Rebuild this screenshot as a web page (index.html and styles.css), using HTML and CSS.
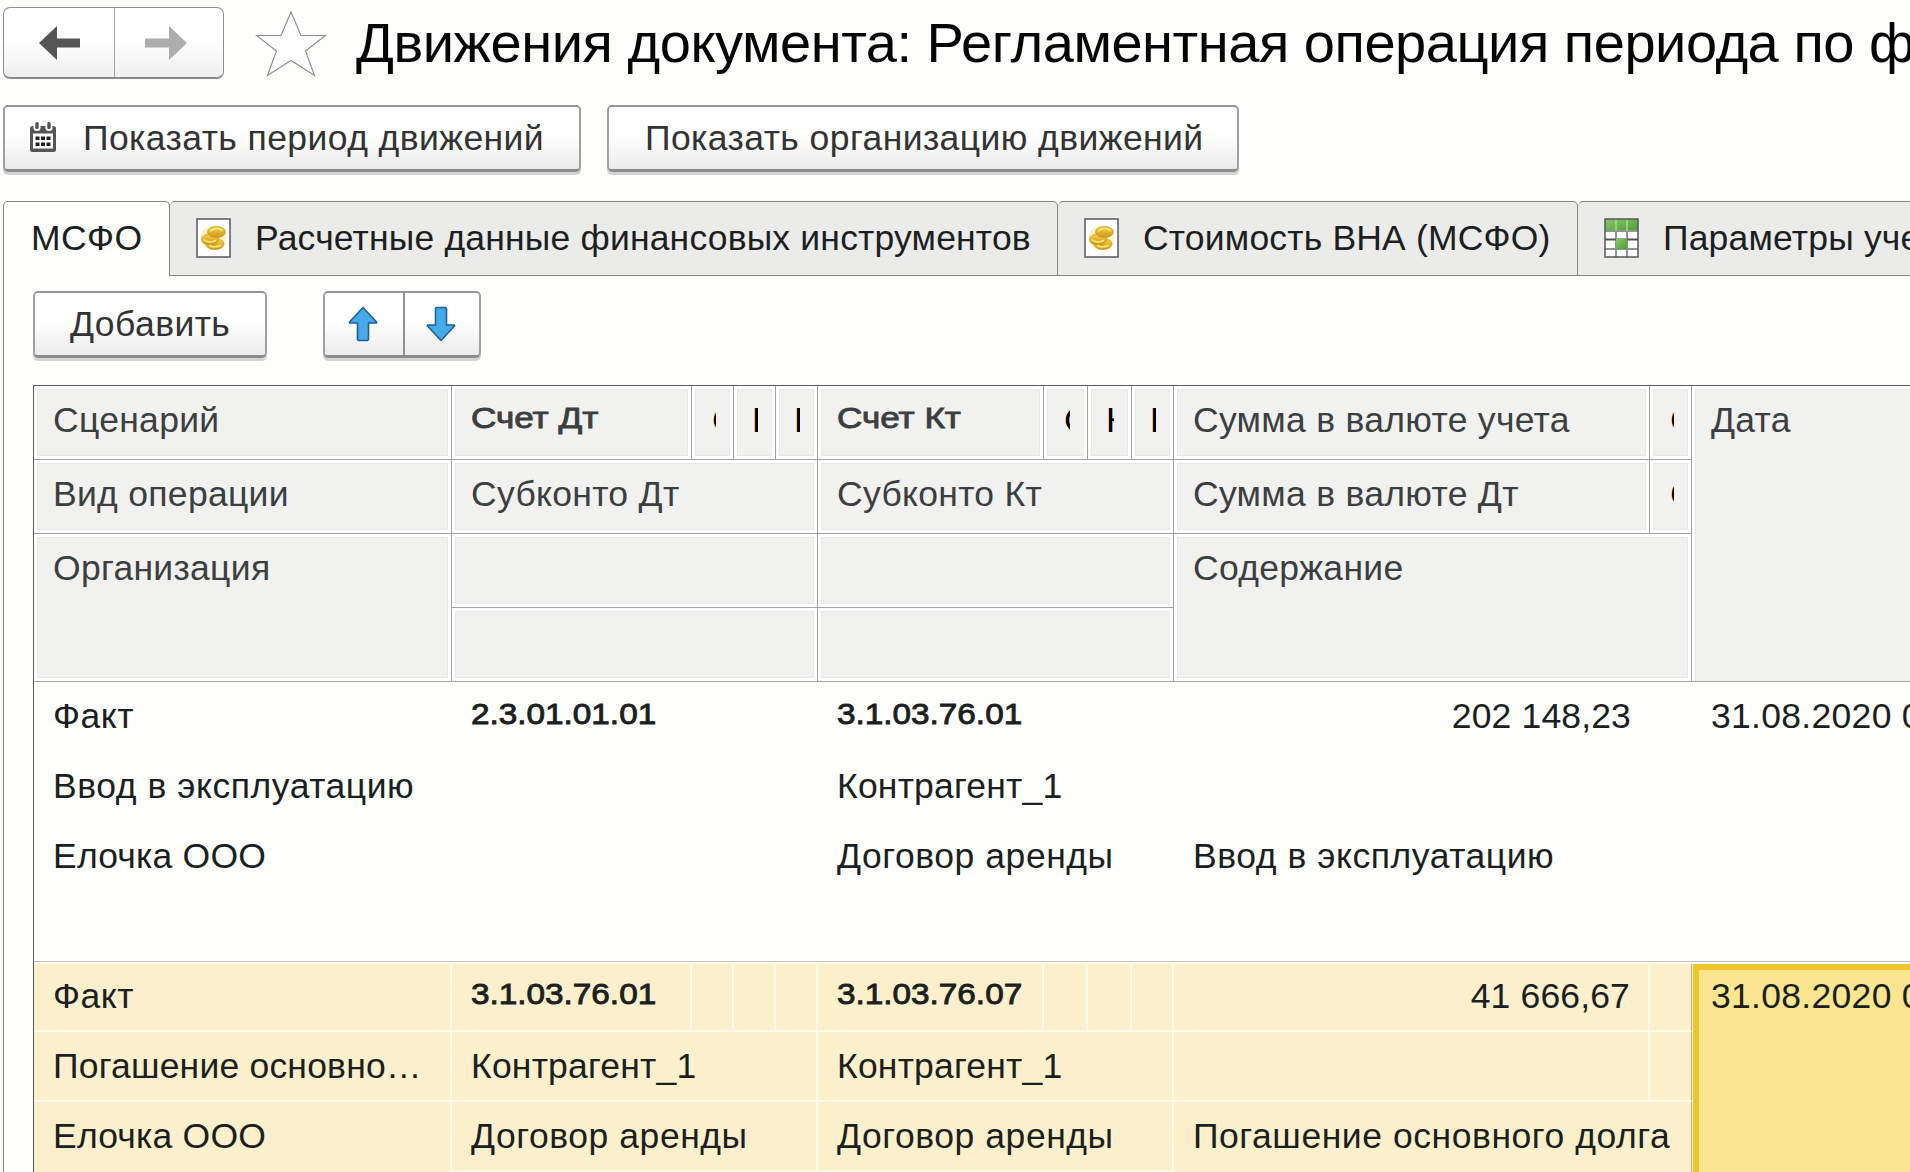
FILE: index.html
```html
<!DOCTYPE html>
<html lang="ru">
<head>
<meta charset="utf-8">
<title>Движения документа</title>
<link rel="stylesheet" href="styles.css">
</head>
<body>
<svg class="defs" aria-hidden="true">
  <defs>
    <linearGradient id="gold" x1="0" y1="0" x2="0" y2="1"><stop offset="0" stop-color="#f5d24a"/><stop offset="1" stop-color="#cf9412"/></linearGradient>
    <linearGradient id="green" x1="0" y1="0" x2="1" y2="1"><stop offset="0" stop-color="#8cc66c"/><stop offset="1" stop-color="#4c9e33"/></linearGradient>
    <symbol id="coins" viewBox="0 0 35 40">
      <rect x="1" y="1" width="33" height="38" fill="#fff" stroke="#55585e" stroke-width="1.5"/>
      <ellipse cx="17.500" cy="20" rx="13" ry="12.500" fill="#f7e7b0" opacity=".6"/>
      <g fill="url(#gold)" stroke="#cf9d22" stroke-width=".8">
        <ellipse cx="19" cy="26" rx="9" ry="5.500"/>
        <ellipse cx="14" cy="21.500" rx="8.500" ry="5.500"/>
        <ellipse cx="20.500" cy="14" rx="9" ry="5.500"/>
      </g>
      <g fill="none" stroke="#fbe57c" stroke-width="1.800">
        <path d="M14.500 13.500c1-3 8-4 12-1"/><path d="M8 21.500c2 3 8 3 12 1"/><path d="M13 27.500c3 2 9 2 12-.5"/>
      </g>
    </symbol>
  </defs>
</svg>

<header class="titlebar">
  <div class="nav">
    <span class="nav-btn"><svg width="42" height="34" viewBox="0 0 42 34"><path d="M0 17 18 0V12.500H41V21.500H18V34Z" fill="#555"/></svg></span>
    <span class="nav-btn"><svg width="42" height="34" viewBox="0 0 42 34"><path d="M42 17 24 0V12.500H0V21.500H24V34Z" fill="#adadad"/></svg></span>
  </div>
  <svg class="star" width="72" height="68" viewBox="0 0 72 68"><path d="M36 2 46 25.500H70.500L50.500 41 59.500 65.500 36 50.500 12.500 65.500 21.500 41 1.500 25.500H26Z" fill="#fff" stroke="#8c8c8c" stroke-width="1.100"/></svg>
  <h1>Движения документа: Регламентная операция периода по ф</h1>
</header>

<div class="commands">
  <button class="btn btn-period">
    <svg width="26" height="30" viewBox="0 0 26 30"><rect y="4" width="26" height="26" rx="2.500" fill="#555"/><rect x="3" y="11.500" width="20" height="15" fill="#fff"/><circle cx="7" cy="5.500" r="3.600" fill="#fff"/><circle cx="19" cy="5.500" r="3.600" fill="#fff"/><rect x="5.300" y="0" width="3.400" height="7" rx="1.500" fill="#555"/><rect x="17.300" y="0" width="3.400" height="7" rx="1.500" fill="#555"/><path d="M5.500 14.500h4v3.500h-4zM11 14.500h4v3.500h-4zM16.500 14.500h4v3.500h-4zM5.500 20.500h4v3.500h-4zM11 20.500h4v3.500h-4zM16.500 20.500h4v3.500h-4z" fill="#222"/></svg>
    <span>Показать период движений</span>
  </button>
  <button class="btn btn-org"><span>Показать организацию движений</span></button>
</div>

<nav class="tabs">
  <div class="tab tab-active tab-ifrs">МСФО</div>
  <div class="tab tab-calc"><svg width="35" height="40"><use href="#coins"/></svg>Расчетные данные финансовых инструментов</div>
  <div class="tab tab-cost"><svg width="35" height="40"><use href="#coins"/></svg>Стоимость ВНА (МСФО)</div>
  <div class="tab tab-params"><svg width="35" height="40" viewBox="0 0 35 40"><rect x="1" y="1" width="33" height="38" fill="#fff"/><rect x="1" y="1" width="33" height="12" fill="url(#green)"/><rect x="12" y="21" width="11" height="10" fill="url(#green)"/><g stroke="#8e9490" stroke-width="2" fill="none"><path d="M12 13V39M23 13V39M1 31H34M1 13H34"/><path d="M1 21.500H34" stroke="#555"/></g><rect x="12" y="20.500" width="11" height="10.500" fill="url(#green)"/><path d="M12 1V13M23 1V13" stroke="#a9d890" stroke-width="1.500"/><rect x="1" y="1" width="33" height="38" fill="none" stroke="#555" stroke-width="1.500"/></svg>Параметры учета</div>
</nav>

<main class="panel">
  <div class="toolbar">
    <button class="btn btn-add"><span>Добавить</span></button>
    <div class="btn move">
      <span><svg width="30" height="36" viewBox="0 0 30 36"><path d="M15 1.500 28.500 16V17H20.500V33.500L19.500 34.500H10.500L9.500 33.500V17H1.500V16Z" fill="#45a9ea" stroke="#1d5f96" stroke-width="1.600" stroke-linejoin="round"/></svg></span>
      <span><svg width="30" height="36" viewBox="0 0 30 36"><path d="M15 34.500 28.500 20V19H20.500V2.500L19.500 1.500H10.500L9.500 2.500V19H1.500V20Z" fill="#45a9ea" stroke="#1d5f96" stroke-width="1.600" stroke-linejoin="round"/></svg></span>
    </div>
  </div>

  <section class="table">
    <div class="grid head">
      <div class="cell">Сценарий</div>
      <div class="cell acc"><b>Счет Дт</b></div>
      <div class="cell tiny round"><i>С</i></div>
      <div class="cell tiny"><i>П</i></div>
      <div class="cell tiny"><i>П</i></div>
      <div class="cell acc"><b>Счет Кт</b></div>
      <div class="cell tiny round wide"><i>С</i></div>
      <div class="cell tiny wide"><i>К</i></div>
      <div class="cell tiny"><i>П</i></div>
      <div class="cell">Сумма в валюте учета</div>
      <div class="cell tiny round"><i>С</i></div>
      <div class="cell date">Дата</div>

      <div class="cell">Вид операции</div>
      <div class="cell span4">Субконто Дт</div>
      <div class="cell span4">Субконто Кт</div>
      <div class="cell">Сумма в валюте Дт</div>
      <div class="cell tiny round"><i>С</i></div>

      <div class="cell rows2">Организация</div>
      <div class="cell span4"></div>
      <div class="cell span4"></div>
      <div class="cell rows2 span2">Содержание</div>
      <div class="cell span4"></div>
      <div class="cell span4"></div>
    </div>

    <div class="grid row">
      <div class="cell">Факт</div>
      <div class="cell span4 acc"><b>2.3.01.01.01</b></div>
      <div class="cell span4 acc"><b>3.1.03.76.01</b></div>
      <div class="cell sum">202 148,23</div>
      <div class="cell"></div>
      <div class="cell date">31.08.2020 0:00:00</div>

      <div class="cell">Ввод в эксплуатацию</div>
      <div class="cell span4"></div>
      <div class="cell span4 party">Контрагент_1</div>
      <div class="cell span2"></div>

      <div class="cell rows2 org">Елочка ООО</div>
      <div class="cell span4"></div>
      <div class="cell span4">Договор аренды</div>
      <div class="cell rows2 span2">Ввод в эксплуатацию</div>
    </div>

    <div class="grid row selected">
      <div class="cell">Факт</div>
      <div class="cell acc"><b>3.1.03.76.01</b></div>
      <div class="cell"></div>
      <div class="cell"></div>
      <div class="cell"></div>
      <div class="cell acc"><b>3.1.03.76.07</b></div>
      <div class="cell"></div>
      <div class="cell"></div>
      <div class="cell"></div>
      <div class="cell sum">41 666,67</div>
      <div class="cell last"></div>
      <div class="cell date current">31.08.2020 0:00:00</div>

      <div class="cell party">Погашение основно…</div>
      <div class="cell span4 party">Контрагент_1</div>
      <div class="cell span4 party">Контрагент_1</div>
      <div class="cell"></div>
      <div class="cell last"></div>

      <div class="cell rows2 org">Елочка ООО</div>
      <div class="cell span4">Договор аренды</div>
      <div class="cell span4">Договор аренды</div>
      <div class="cell rows2 span2 last">Погашение основного долга</div>
      <div class="cell span4"></div>
      <div class="cell span4"></div>
    </div>
  </section>
</main>
</body>
</html>
```
FILE: styles.css
```css
* { box-sizing: border-box; }

html, body { height: 100%; }

body {
  margin: 0;
  padding: 7px 0 0 3px;
  width: 100%;
  height: 1172px;
  overflow: hidden;
  display: flex;
  flex-direction: column;
  background: #fefefd;
  color: #1c1f1f;
  font: 35.5px/40px "Liberation Sans", Arial, sans-serif;
  letter-spacing: 0.55px;
  white-space: nowrap;
}

svg { flex: none; display: block; }
.defs { position: absolute; width: 0; height: 0; }

/* Title bar */
.titlebar { display: flex; flex: none; height: 98px; align-items: flex-start; overflow: hidden; }

.nav {
  display: flex;
  flex: none;
  width: 221px;
  height: 72px;
  border: 1px solid #8f8f8f;
  border-bottom: 2px solid #8a8a8a;
  border-radius: 7px;
  background: linear-gradient(#fff 45%, #efefef);
}
.nav-btn { flex: 1; display: flex; align-items: center; }
.nav-btn:first-child { flex: 0 0 111px; border-right: 1px solid #a5a5a5; padding-left: 35px; }
.nav-btn:last-child { padding-left: 30px; }

.star { margin: 3px 0 0 31px; }

h1 {
  margin: 4px 0 0 29px;
  font-size: 56px;
  line-height: 64px;
  font-weight: 400;
  letter-spacing: -0.46px;
  color: #050505;
}

/* Buttons */
.btn {
  display: flex;
  align-items: center;
  height: 67px;
  padding: 0;
  border: 2px solid #a0a0a0;
  border-top-color: #959595;
  border-bottom: 3px solid #8c8c8c;
  border-radius: 5px;
  box-shadow: 0 3px 0 #d2d2d0;
  background: linear-gradient(#fff 45%, #ebebeb);
  font: inherit;
  letter-spacing: 0.42px;
  color: #333;
}
.commands { display: flex; flex: none; gap: 26px; height: 96px; }
.btn-period { width: 578px; padding: 0 0 1px 25px; gap: 27px; }
.btn-period svg { margin-bottom: 2px; }
.btn-org { width: 632px; padding: 0 0 1px 36px; }

/* Tabs */
.tabs { display: flex; flex: none; height: 75px; overflow: hidden; }
.tab {
  display: flex;
  align-items: center;
  gap: 24px;
  flex: none;
  border: 1px solid #858585;
  border-left-width: 0;
  border-radius: 5px 5px 0 0;
  background: #ebebea;
  padding-bottom: 2px;
  letter-spacing: 0.18px;
}
.tab-active { background: #fefefd; border-bottom: 0; border-left-width: 1px; }
.tab-ifrs { width: 167px; padding-left: 27px; letter-spacing: 0.4px; }
.tab-calc { width: 888px; padding-left: 26px; }
.tab-cost { width: 520px; padding-left: 26px; }
.tab-params { flex: 1 0 0; padding-left: 26px; border-right: 0; border-top-right-radius: 0; min-width: 0; overflow: hidden; }

/* Panel */
.panel { flex: 1; padding: 15px 0 0 29px; border-left: 1px solid #858585; overflow: hidden; }
.toolbar { display: flex; height: 94px; gap: 56px; }
.btn-add { width: 234px; padding: 0 0 1px 35px; }
.move { width: 158px; align-items: stretch; }
.move span { flex: 1; display: flex; align-items: center; justify-content: center; padding: 0 3px 0 0; }
.move span:first-child { flex: 0 0 80px; border-right: 2px solid #8f8f8f; }

/* Table */
.table { border: 1px solid #5a5a5a; border-width: 1px 0 0 1px; }
.grid {
  display: grid;
  grid-template-columns: 418px 240px 42px 42px 42px 226px 44px 44px 42px 476px 42px 1fr;
}
.cell { padding: 14px 0 0 19px; overflow: hidden; min-width: 0; }
.span2 { grid-column: span 2; }
.span4 { grid-column: span 4; }
.rows2 { grid-row: span 2; }
.date { grid-area: 1 / 12 / span 4 / 13; letter-spacing: 0.3px; }
.sum { text-align: right; padding-right: 19px; letter-spacing: 0.15px; }
.party, .org { letter-spacing: 0.2px; }

/* Account numbers are set in a wide, semi-bold face */
.acc b {
  display: inline-block;
  font-size: 30px;
  line-height: 34px;
  font-weight: 400;
  letter-spacing: 0;
  -webkit-text-stroke: 0.9px currentColor;
  transform: translateY(-4px) scaleX(1.11);
  transform-origin: 0 0;
}

.head { grid-template-rows: repeat(4, 74px); color: #3c3f3f; letter-spacing: 0.3px; }
.head .acc b { transform: translateY(-4px) scaleX(1.17); }
.head .cell {
  background: #f1f1f0;
  border: 0 solid #a3a3a3;
  border-width: 0 1px 1px 0;
  box-shadow: inset 0 0 0 3px #fff, inset 0 0 0 4px #e8e8e7;
}
.head .date { border-right: 0; box-shadow: inset 3px 3px 0 #fff, inset 4px 4px 0 #e8e8e7; }

/* Columns too narrow for their captions show only the first strokes */
.tiny { padding-left: 18px; }
.tiny i { display: block; width: 6px; overflow: hidden; font-style: normal; color: #000; }
.tiny.wide i { width: 8px; }
.head .tiny.round { padding-left: 20px; }
.tiny.round i { width: 4px; }
.tiny.round.wide i { width: 6px; }

.row { grid-template-rows: repeat(4, 70px); border-bottom: 1px solid #bdbdb8; height: 280px; }

.selected { border: 0; border-top: 2px solid #fffdf0; background: #fbf0cb; grid-template-rows: 68px 70px 70px 70px; }
.selected .cell { border: 0 solid #fffbe6; border-width: 0 2px 2px 0; }
.selected .cell:nth-child(-n+12) { padding-top: 12px; }
.selected .last { border-right-color: #b9b08e; border-right-width: 1px; }
.selected .sum { padding-right: 18px; }
.selected .date.current {
  padding: 6px 0 0 12px;
  margin-left: 1px;
  border: 6px solid #eec72d;
  border-right: 0;
  background: #fbe58e;
}
```
